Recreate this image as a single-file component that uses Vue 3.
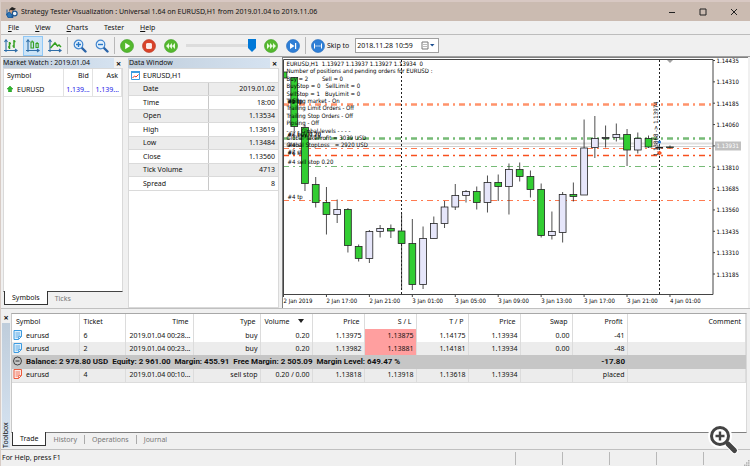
<script setup>
import { ref } from 'vue'

const menu = [
  { key: 'F', rest: 'ile' },
  { key: 'V', rest: 'iew' },
  { key: 'C', rest: 'harts' },
  { key: '', rest: 'Tester' },
  { key: 'H', rest: 'elp' }
]
const speed = ref(100)
const skipDate = ref('2018.11.28 10:59')

const bar = [
  ['Date', '2019.01.02'],
  ['Time', '18:00'],
  ['Open', '1.13534'],
  ['High', '1.13619'],
  ['Low', '1.13484'],
  ['Close', '1.13560'],
  ['Tick Volume', '4713'],
  ['Spread', '8']
]

const positions = [
  { symbol: 'eurusd', ticket: 6, time: '2019.01.04 00:28...', type: 'buy', volume: '0.20', price: '1.13975', sl: '1.13875', tp: '1.14175', now: '1.13934', swap: '0.00', profit: '-41' },
  { symbol: 'eurusd', ticket: 2, time: '2019.01.04 00:23...', type: 'buy', volume: '0.20', price: '1.13982', sl: '1.13881', tp: '1.14181', now: '1.13934', swap: '0.00', profit: '-48' }
]

// Candles: high, body top, body bottom, low, rising flag
const first = 283.5
const step = 10.736
const candles = [
  [72, 72, 78, 78, 0], [77, 77.5, 126.5, 131, 0], [125, 127.5, 183.5, 191, 0],
  [177, 184.5, 202.5, 207.5, 0], [187, 202.5, 214.5, 234.5, 0], [199.5, 209.5, 214.5, 223, 1],
  [208, 209.5, 245.5, 252.5, 0], [244.5, 246.5, 258.5, 261.5, 0], [230, 231.5, 258.5, 263, 1],
  [225, 228.5, 231.5, 237.5, 1], [224.5, 228.5, 231, 238, 0], [213, 231, 243.5, 290, 0],
  [219, 243.5, 284.5, 290, 0], [226.5, 238.5, 284.5, 289, 1], [216.5, 223.5, 238.5, 238.5, 1],
  [201, 207, 223.5, 228, 1], [184, 195.5, 207, 210, 1], [190, 191.5, 195.5, 202.5, 1],
  [186.5, 191.5, 202.5, 209.5, 0], [175.5, 182.5, 202.5, 212.5, 1], [174.5, 182.5, 186.5, 201, 0],
  [163.5, 169.5, 186.5, 214.5, 1], [162.5, 169.5, 176.5, 181.5, 0], [170.5, 176.5, 189.5, 197.5, 0],
  [183.5, 189.5, 235.5, 237.5, 0], [211.5, 231.5, 235.5, 239.5, 1], [192, 194.5, 232.5, 242.5, 1],
  [182.5, 194.5, 196.5, 201.5, 0], [119.5, 148, 195, 195, 1], [116, 138.5, 147.5, 158, 1],
  [125.5, 137.5, 138.5, 147.5, 1], [123.5, 134.5, 137.5, 141.5, 1], [129, 134.5, 150, 166, 0],
  [132.5, 138.5, 150, 153.5, 1], [135.5, 138.5, 147, 148, 0], [145.5, 147.5, 148, 150, 0],
  [145.5, 147, 147.5, 148.5, 0]
].map((c, i) => ({ x: first + step * i, high: c[0], top: c[1], bottom: c[2], low: c[3], up: !!c[4] }))

const levels = [
  { y: 104.5, w: 2.4, c: '#ff936b' },
  { y: 138.5, w: 2.4, c: '#76bb76' },
  { y: 148.5, w: 1, c: '#ff7a50' },
  { y: 155.5, w: 1.4, c: '#f8501e' },
  { y: 166.5, w: 1.2, c: '#76bb76' },
  { y: 200.5, w: 1, c: '#ff7a50' }
]
const prices = ['1.14435', '1.14310', '1.14185', '1.14060', '', '1.13810', '1.13685', '1.13560', '1.13435', '1.13310', '1.13185']
const times = ['2 Jan 2019', '2 Jan 17:00', '2 Jan 21:00', '3 Jan 01:00', '3 Jan 05:00', '3 Jan 09:00', '3 Jan 13:00', '3 Jan 17:00', '3 Jan 21:00', '4 Jan 01:00']
const comments = [
  'EURUSD,H1  1.13927 1.13937 1.13927 1.13934  0',
  'Number of positions and pending orders for EURUSD :',
  'Buy = 2        Sell = 0',
  'BuyStop = 0   SellLimit = 0',
  'SellStop = 1   BuyLimit = 0',
  'Trailing market - On',
  'Trailing Limit Orders - Off',
  'Trailing Stop Orders - Off',
  'Pipsing - Off',
  '- - - - Global levels - - - -',
  'Global TakeProfit = 3039 USD',
  'Global StopLoss   = 2920 USD'
]
const marks = [
  { y: 103, t: '#6 tp' }, { y: 104, t: '#2 tp' }, { y: 136, t: '#2 buy 0.20' }, { y: 137, t: '#6 buy 0.20' },
  { y: 147, t: '#4 sl' }, { y: 154, t: '#2 sl' }, { y: 155, t: '#6 sl' }, { y: 164, t: '#4 sell stop 0.20' }, { y: 199, t: '#4 tp' }
]
</script>

<template>
  <div class="window">
    <header class="title">
      <svg class="app-icon" viewBox="0 0 12 12">
        <path d="M3 3.5 6 1l4 1.8-3 2z" fill="#222" />
        <path d="M3 3.5v2.2l3 1 1-2z" fill="#444" />
        <circle cx="5" cy="6" r="2" fill="#d9a07a" />
        <path d="M1 3.5v6M0.5 8l3-2 2.5 3 1 2.6H2z" stroke="#1d5c9c" fill="#2d77b8" />
        <circle cx="8.7" cy="7.5" r="2.4" fill="#eef5fb" stroke="#1c5590" stroke-width="1.2" />
        <path d="m7.2 9.5-1.5 2" stroke="#1c5590" stroke-width="1.4" />
      </svg>
      <h1>Strategy Tester Visualization : Universal 1.64 on EURUSD,H1 from 2019.01.04 to 2019.11.06</h1>
      <div class="caption">
        <button aria-label="Minimize"><svg viewBox="0 0 8 8"><path d="M1 4.5h6" /></svg></button>
        <button aria-label="Maximize"><svg viewBox="0 0 8 8"><path d="M1 1h6v6H1z" /></svg></button>
        <button aria-label="Close"><svg viewBox="0 0 8 8"><path d="m1 1 6 6M7 1 1 7" /></svg></button>
      </div>
    </header>

    <nav class="menu">
      <button v-for="m in menu" :key="m.rest"><u>{{ m.key }}</u>{{ m.rest }}</button>
    </nav>

    <div class="toolbar">
      <button class="tool" aria-label="Bars">
        <svg viewBox="0 0 14 14"><path d="M2 1v12M0 11.500h13" class="axis" /><path d="m.5 3 1.500-2.200L3.500 3M11 10l2.200 1.500L11 13" class="axis" /><path d="M5.500 3v7M4 8h1.500M5.500 4.500H7M10 1v8M8.500 7H10M10 2.500h1.500" class="gr" /></svg>
      </button>
      <button class="tool on" aria-label="Candles">
        <svg viewBox="0 0 14 14"><path d="M2 1v12M0 11.500h13" class="axis" /><path d="m.5 3 1.500-2.200L3.500 3M11 10l2.200 1.500L11 13" class="axis" /><path d="M5 3h2.500v6H5zM10 4.500h2.200v4H10zM6.200 1.500V3M11.100 3v1.500" class="gr thin" /></svg>
      </button>
      <button class="tool" aria-label="Line">
        <svg viewBox="0 0 14 14"><path d="M2 1v12M0 11.500h13" class="axis" /><path d="m.5 3 1.500-2.200L3.500 3M11 10l2.200 1.500L11 13" class="axis" /><path d="M2.500 9 7 4l2.500 3 1.500-1 2 2" class="gr" /></svg>
      </button>
      <i class="sep"></i>
      <button class="tool" aria-label="Zoom in">
        <svg viewBox="0 0 14 14"><path d="m8.500 8.500 4 4" stroke="#2a64a8" stroke-width="2.400" stroke-linecap="round" /><circle cx="5.500" cy="5.500" r="4.300" fill="#e3f0fb" stroke="#4387cf" stroke-width="1.200" /><path d="M3 5.500h5M5.500 3v5" stroke="#2878c8" stroke-width="1.400" /></svg>
      </button>
      <button class="tool" aria-label="Zoom out">
        <svg viewBox="0 0 14 14"><path d="m8.500 8.500 4 4" stroke="#2a64a8" stroke-width="2.400" stroke-linecap="round" /><circle cx="5.500" cy="5.500" r="4.300" fill="#e3f0fb" stroke="#4387cf" stroke-width="1.200" /><path d="M3 5.500h5" stroke="#2878c8" stroke-width="1.400" /></svg>
      </button>
      <i class="sep"></i>
      <button class="tool" aria-label="Play">
        <svg viewBox="0 0 14 14"><circle cx="7" cy="7" r="6.500" class="green" /><path d="m5.200 3.800 5 3.200-5 3.200z" fill="#fff" /></svg>
      </button>
      <button class="tool" aria-label="Stop">
        <svg viewBox="0 0 14 14"><circle cx="7" cy="7" r="6.500" fill="#d8432a" stroke="#b93420" stroke-width=".6" /><path d="M4.700 4.700h4.600v4.600H4.700z" fill="#fbe9e6" stroke="#fff" /></svg>
      </button>
      <button class="tool" aria-label="Slower">
        <svg viewBox="0 0 14 14"><circle cx="7" cy="7" r="6.500" class="green" /><path d="M5 4v6L2 7zM8 4v6L5 7zM11 4v6L8 7z" fill="#e9fbdf" /></svg>
      </button>
      <input v-model="speed" class="speed" type="range" min="0" max="100" aria-label="Speed" />
      <button class="tool" aria-label="Faster">
        <svg viewBox="0 0 14 14"><circle cx="7" cy="7" r="6.500" class="green" /><path d="M3 4v6l3-3zM6 4v6l3-3zM9 4v6l3-3z" fill="#e9fbdf" /></svg>
      </button>
      <button class="tool" aria-label="Step">
        <svg viewBox="0 0 14 14"><circle cx="7" cy="7" r="6.500" class="blue" /><path d="M4 4v6l4.500-3zM9 4h1.200v6H9z" fill="#fff" /></svg>
      </button>
      <i class="sep"></i>
      <button class="skip">
        <svg viewBox="0 0 14 14"><circle cx="7" cy="7" r="6.500" class="blue" /><path d="M3.500 4.500v5M10.500 4.500v5" stroke="#fff" /><path d="M4.500 7h5" stroke="#fff" stroke-width="1.200" stroke-dasharray="1.200 .7" /></svg>
        Skip to
      </button>
      <div class="date">
        <input v-model="skipDate" type="text" aria-label="Skip to date" />
        <button aria-label="Open calendar">
          <svg viewBox="0 0 14 9"><path d="M1 1h6v7H1z" fill="#fff" stroke="#777" /><path d="M2 3.500h4M2 5.500h4" stroke="#bbb" /><path d="M9 3h4.500L11.200 5.500z" fill="#1d4f91" /></svg>
        </button>
      </div>
    </div>

    <main class="work">
      <section class="panel market">
        <div class="head"><h2>Market Watch : 2019.01.04</h2><button aria-label="Close Market Watch">×</button></div>
        <div class="fill">
          <table class="quotes">
            <thead><tr><th>Symbol</th><th>Bid</th><th>Ask</th></tr></thead>
            <tbody>
              <tr>
                <td><svg class="up" viewBox="0 0 6 6"><path d="M3 0 6 3H4.500v3h-3V3H0z" fill="#2eb82e" stroke="#189018" stroke-width=".5" /></svg>EURUSD</td>
                <td>1.139...</td><td>1.139...</td>
              </tr>
            </tbody>
          </table>
        </div>
        <div class="tabs"><button class="active">Symbols</button><button>Ticks</button></div>
      </section>

      <section class="panel data">
        <div class="head"><h2>Data Window</h2><button aria-label="Close Data Window">×</button></div>
        <div class="fill">
          <div class="pair">
            <svg viewBox="0 0 9 9"><path d="M.5.5h8v8h-8z" fill="#fff" stroke="#3c9be0" /><path d="M0 0h9v2H0z" fill="#3c9be0" /><path d="m1.500 7 2-2 1.500 1 2.500-2.500" stroke="#e23a2a" fill="none" /></svg>
            EURUSD,H1
          </div>
          <table class="values">
            <tbody><tr v-for="r in bar" :key="r[0]"><th>{{ r[0] }}</th><td>{{ r[1] }}</td></tr></tbody>
          </table>
        </div>
      </section>

      <section class="chart">
        <svg viewBox="283 58 465 250" role="img" aria-label="EURUSD H1 candlestick chart">
          <defs><clipPath id="plot"><path d="M284 60h429v234H284z" /></clipPath></defs>
          <g clip-path="url(#plot)">
            <path d="M284 143.500h429" stroke="#dedede" stroke-width="2" />
            <path d="M284 146.500h429" stroke="#cfcfcf" />
            <path v-for="l in levels" :key="l.y" :d="`M283 ${l.y}h430`" :stroke="l.c" :stroke-width="l.w" stroke-dasharray="6 4 2 4" fill="none" />
            <path d="M401.500 60v234M659.500 60v234" stroke="#222" stroke-dasharray="2 2" />
            <g v-for="c in candles" :key="c.x" stroke="#222" stroke-width=".8">
              <path :d="`M${c.x} ${c.high}V${c.low}`" />
              <rect :x="c.x - 3.4" :y="c.top" width="6.800" :height="c.bottom - c.top" :fill="c.up ? '#e6e6fa' : '#32cd32'" />
            </g>
            <path d="M667 60h6l-3 3z" fill="#a0a0a0" />
            <circle cx="659.500" cy="142" r="1.500" fill="#1f6fd0" />
            <path d="m657 153 2.500-2.500L662 153l-2.500 2.500z" fill="#f8501e" />
          </g>
          <path d="M283.500 294.500V59.500H713V294.500z" fill="none" stroke="#444" />
          <g class="txt">
            <text v-for="(t, i) in comments" :key="t" x="286.500" :y="66 + i * 7.4" xml:space="preserve">{{ t }}</text>
            <text v-for="m in marks" :key="m.t" x="287.500" :y="m.y">{{ m.t }}</text>
            <text transform="translate(658 156) rotate(-90)">1.13868 -&gt; 1.13974</text>
            <template v-for="(p, i) in prices" :key="i">
              <path :d="`M713 ${60.500 + i * 21.35}h2`" stroke="#444" />
              <text x="716.500" :y="63 + i * 21.35">{{ p }}</text>
            </template>
            <template v-for="(t, i) in times" :key="t">
              <path :d="`M${283.500 + i * 42.94} 294v3`" stroke="#444" />
              <text :x="283.500 + i * 42.94" y="303">{{ t }}</text>
            </template>
            <path d="M715 141.500h26v9h-26z" fill="#c0c0c0" />
            <text x="716.500" y="148" class="now">1.13931</text>
          </g>
        </svg>
      </section>
    </main>

    <section class="toolbox">
      <div class="side"><button aria-label="Close Toolbox">×</button><h2>Toolbox</h2></div>
      <div class="box">
        <div class="fill">
          <table class="trades">
            <colgroup><col class="c67" /><col class="c46" /><col class="c68" /><col class="c67" /><col class="c52" /><col class="c52" /><col class="c52" /><col class="c52" /><col class="c52" /><col class="c52" /><col class="c55" /><col /></colgroup>
            <thead>
              <tr><th class="l">Symbol</th><th class="l">Ticket</th><th>Time</th><th>Type</th><th class="l">Volume <svg class="sort" viewBox="0 0 6 4"><path d="M0 0h6L3 4z" /></svg></th><th>Price</th><th>S / L</th><th>T / P</th><th>Price</th><th>Swap</th><th>Profit</th><th>Comment</th></tr>
            </thead>
            <tbody>
              <tr v-for="p in positions" :key="p.ticket">
                <td class="l"><svg class="doc" viewBox="0 0 9 10"><path d="M1 .5h7.500v6L5.500 9.500H1z" fill="#dff0fc" stroke="#3c9be0" /><path d="M2.500 3H7M2.500 5H7M2.500 7h2.500M5.500 9.500v-3h3" stroke="#3c9be0" fill="none" stroke-width=".8" /></svg>{{ p.symbol }}</td>
                <td class="l">{{ p.ticket }}</td><td>{{ p.time }}</td><td>{{ p.type }}</td><td>{{ p.volume }}</td><td>{{ p.price }}</td><td class="alert">{{ p.sl }}</td><td>{{ p.tp }}</td><td>{{ p.now }}</td><td>{{ p.swap }}</td><td>{{ p.profit }}</td><td></td>
              </tr>
              <tr class="sum">
                <td colspan="10" class="l"><svg class="doc" viewBox="0 0 9 10"><circle cx="4.500" cy="5" r="4" fill="none" stroke="#333" stroke-width=".9" /><path d="M2.500 5h4" stroke="#333" /></svg>Balance: 2 978.80 USD&nbsp; Equity: 2 961.00&nbsp; Margin: 455.91&nbsp; Free Margin: 2 505.09&nbsp; Margin Level: 649.47 %</td>
                <td>-17.80</td><td></td>
              </tr>
              <tr class="alt">
                <td class="l"><svg class="doc" viewBox="0 0 9 10"><path d="M1 .5h7.500v6L5.500 9.500H1z" fill="#fdeae6" stroke="#ee5a3c" /><path d="M2.500 3H7M2.500 5H7M2.500 7h2.500M5.500 9.500v-3h3" stroke="#ee5a3c" fill="none" stroke-width=".8" /></svg>eurusd</td>
                <td class="l">4</td><td>2019.01.04 00:10...</td><td>sell stop</td><td>0.20 / 0.00</td><td>1.13818</td><td>1.13918</td><td>1.13618</td><td>1.13934</td><td></td><td>placed</td><td></td>
              </tr>
            </tbody>
          </table>
        </div>
        <div class="tabs wide"><button class="active">Trade</button><button>History</button><button>Operations</button><button>Journal</button></div>
      </div>
      <button class="magnify" aria-label="Enlarge">
        <svg viewBox="0 0 32 32"><g stroke="#fff" stroke-width="7" fill="none" stroke-linecap="round"><circle cx="12" cy="12" r="8.500" /><path d="m19 19 7.500 7.500" /></g><circle cx="12" cy="12" r="8.500" fill="#fff" stroke="#444" stroke-width="3" /><path d="m20 20 6.500 6.500" stroke="#444" stroke-width="5" stroke-linecap="round" /><path d="M7.500 12h9M12 7.500v9" stroke="#444" stroke-width="2.400" /></svg>
      </button>
    </section>

    <footer class="status"><span>For Help, press F1</span><i></i><i></i><i></i><i></i><i></i>
      <svg class="grip" viewBox="0 0 6 6"><path d="M4 0h1.500v1.500H4zM4 2.200h1.500v1.500H4zM4 4.400h1.500v1.500H4zM2 2.200h1.500v1.500H2zM2 4.400h1.500v1.500H2zM0 4.400h1.500v1.500H0z" fill="#b0b0b0" /></svg>
    </footer>
  </div>
</template>

<style>
body { background: #f0f0f0; }
</style>

<style scoped>
.window {
  display: flex; flex-direction: column; box-sizing: border-box; min-height: 100vh;
  border-left: 1px solid #d8ccc6; background: #f0f0f0; color: #111;
  font: 7px/12px "Noto Sans", "Open Sans", sans-serif;
}
h1, h2 { margin: 0; font: inherit; white-space: nowrap; }
button { padding: 0; border: 0; background: none; color: inherit; font: inherit; }
svg { display: block; fill: none; }
table { border-collapse: collapse; }
.title { display: flex; align-items: center; gap: 3px; box-sizing: border-box; height: 21px; padding: 0 12px 0 5px; border-top: 2px solid #d8c8c3; background: #cbbbb1; }
.title h1 { flex: 1; }
.app-icon { width: 12px; height: 12px; }
.caption { display: flex; gap: 23px; }
.caption svg { width: 8px; height: 8px; stroke: #222; stroke-width: 1; }
.menu { display: flex; gap: 16px; height: 13px; padding-left: 7px; border-bottom: 1px solid #bdbdbd; }
.menu button { line-height: 13px; }
.toolbar { display: flex; align-items: center; gap: 8px; height: 21px; padding-left: 3px; }
.tool, .skip svg { flex: none; width: 14px; height: 14px; }
.tool svg { width: 14px; height: 14px; }
.tool.on { margin: 0 -3px; padding: 2px; border: 1px solid #90c8f6; background: #cce4f7; box-sizing: content-box; }
.axis { stroke: #2f6ea8; stroke-width: 1.1; }
.gr { stroke: #35a022; stroke-width: 1.5; }
.gr.thin { stroke-width: 1.1; }
.green { fill: #55b92f; stroke: #3c9a22; stroke-width: .6; }
.blue { fill: #2f7fd6; stroke: #1f66b8; stroke-width: .6; }
.sep { flex: none; width: 1px; height: 17px; margin: 0 -3px; background: #b8b8b8; }
.speed { appearance: none; width: 70px; height: 14px; margin: 0; background: linear-gradient(#dcdcdc, #dcdcdc) center / 100% 3px no-repeat; }
.speed::-webkit-slider-thumb { appearance: none; width: 8px; height: 13px; background: #0078d7; clip-path: polygon(0 0, 100% 0, 100% 70%, 50% 100%, 0 70%); }
.skip { display: flex; align-items: center; gap: 2px; }
.date { display: flex; align-items: center; box-sizing: border-box; width: 84px; height: 15px; margin-left: -2px; border: 1px solid #a0a0a0; background: #fff; }
.date input { flex: 1; min-width: 0; padding: 0 1px; border: 0; background: none; color: inherit; font: inherit; }
.date button svg { width: 14px; height: 9px; margin-right: 3px; }

.work { display: grid; grid-template-columns: 120px 151px 1fr; gap: 5px; padding: 1px 2px 0 2px; border-top: 1px solid #a0a0a0; border-bottom: 1px solid #c0c0c0; }
.panel { display: flex; flex-direction: column; }
.head { display: flex; align-items: center; justify-content: space-between; height: 10px; background: linear-gradient(90deg, #bfcddb, #d7e4f2); line-height: 10px; }
.head button { width: 9px; height: 10px; background: #f0f0f0; font-size: 9px; font-weight: 700; line-height: 9px; }
.fill { flex: 1; border: 1px solid #d9d9d9; background: #fff; }
.market .fill { border-bottom: 1px solid #444; }
.quotes { width: 100%; table-layout: fixed; }
.quotes th, .quotes td { height: 14px; padding: 0 3px; border-right: 1px solid #e2e2e2; font-weight: 400; text-align: right; white-space: nowrap; }
.quotes td { height: 13px; padding: 0 2px; border-bottom: 1px solid #e2e2e2; color: #2222e8; }
.quotes th:first-child { width: 52px; text-align: left; }
.quotes th:not(:first-child) { width: 22px; }
.quotes td:first-child { color: inherit; text-align: left; }
.up { display: inline-block; width: 6px; height: 6px; margin: 0 4px 0 1px; vertical-align: 0; }
.tabs { display: flex; height: 16px; padding-left: 1px; }
.tabs button { height: 13px; padding: 0 7px; color: #777; line-height: 12px; }
.tabs .active { position: relative; margin-top: -1px; height: 14px; border: solid #333; border-width: 0 1px 1px; background: #fff; color: #111; }
.data .head { padding-left: 1px; }
.pair { display: flex; align-items: center; gap: 3px; height: 13px; padding-left: 2px; border-bottom: 1px solid #d9d9d9; }
.pair svg { width: 9px; height: 9px; }
.values { width: 100%; height: 108px; table-layout: fixed; }
.values th, .values td { height: 12px; padding: 0 3px 0 14px; border-bottom: 1px solid #dadada; font-weight: 400; line-height: 12px; text-align: left; }
.values th { width: 62px; border-right: 1px solid #c8c8c8; }
.values td { text-align: right; }
.values tr:nth-child(odd) { background: #ececec; }
.chart { margin: -1px 0 0 -2px; border: solid #808080; border-width: 1px 0 0 1px; background: #fff; }
.chart svg { width: 100%; height: auto; }
.txt text { fill: #000; font: 6px "DejaVu Sans Condensed", "DejaVu Sans", sans-serif; white-space: pre; }
.txt .now { fill: #fff; }

.toolbox { position: relative; display: flex; flex: 1; margin-top: 4px; padding-right: 3px; border-bottom: 1px solid #c0c0c0; }
.side { display: flex; flex-direction: column; align-items: center; width: 8px; margin: 0 1px; }
.side button { height: 10px; font-size: 9px; font-weight: 700; line-height: 8px; }
.side h2 { flex: 1; width: 8px; margin-bottom: 1px; background: linear-gradient(#d7e4f2, #bfcddb); line-height: 8px; writing-mode: vertical-rl; transform: rotate(180deg); }
.box { display: flex; flex: 1; flex-direction: column; min-width: 0; }
.box .fill { border-color: #a8a8a8 #d9d9d9 #808080 #c8c8c8; }
.trades { width: 100%; height: 69px; table-layout: fixed; }
.trades th, .trades td { height: 13px; padding: 0 2px; border-right: 1px solid #dcdcdc; font-weight: 400; line-height: 12px; text-align: right; white-space: nowrap; }
.trades th { height: 15px; padding: 0 4px; }
.trades .l { text-align: left; }
.trades td.l { padding-left: 1px; }
.trades td.l + td.l { padding-left: 4px; }
.trades tbody tr:nth-child(even), .trades .alt { background: #ececec; }
.trades .alt { border-bottom: 1px solid #dcdcdc; }
.trades tbody .sum { background: #c6c6c6; }
.trades .sum td { border: 0; font: 700 8px/12px Roboto, sans-serif; }
.trades .alert { background: #ff9f9f; }
.doc { display: inline-block; width: 9px; height: 10px; margin-right: 4px; vertical-align: -2px; }
.sort { display: inline-block; width: 6px; height: 4px; margin-left: 7px; fill: #222; vertical-align: 1px; }
.c67 { width: 67px; }
.c68 { width: 68px; }
.c46 { width: 46px; }
.c52 { width: 52px; }
.c55 { width: 55px; }
.wide button + button + button { border-left: 1px solid #aaa; height: 9px; margin-top: 2px; line-height: 9px; }
.magnify { position: absolute; right: 10px; bottom: -7px; width: 32px; height: 32px; }
.status { display: flex; align-items: center; height: 16px; }
.status span { flex: 1; padding-left: 1px; }
.status i { width: 46px; height: 13px; border-left: 1px solid #b8b8b8; }
.grip { align-self: flex-end; width: 6px; height: 6px; margin-left: -6px; }
</style>
